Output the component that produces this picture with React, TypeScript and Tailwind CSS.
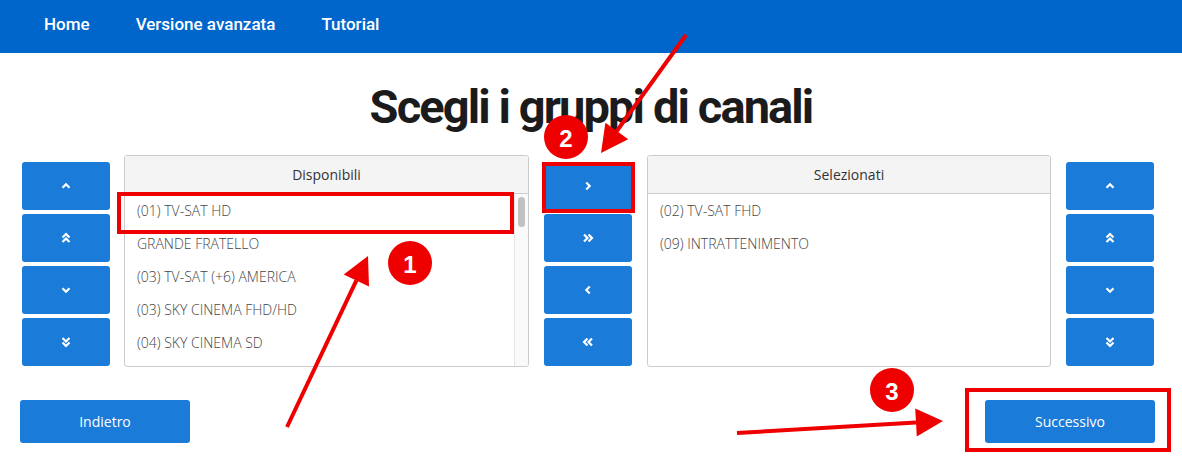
import type { ReactNode } from "react";

const available = [
  "(01) TV-SAT HD",
  "GRANDE FRATELLO",
  "(03) TV-SAT (+6) AMERICA",
  "(03) SKY CINEMA FHD/HD",
  "(04) SKY CINEMA SD",
];

const selected = ["(02) TV-SAT FHD", "(09) INTRATTENIMENTO"];

type Dir = "up" | "down" | "left" | "right";

function Chevron({ dir, double }: { dir: Dir; double?: boolean }) {
  const rot = { up: 0, right: 90, down: 180, left: 270 }[dir];
  return (
    <svg width="12" height="12" viewBox="0 0 12 12" style={{ transform: `rotate(${rot}deg)` }}>
      {double ? (
        <>
          <path d="M2.5 5.5 L6 2 L9.5 5.5" fill="none" stroke="white" strokeWidth="2.2" />
          <path d="M2.5 10 L6 6.5 L9.5 10" fill="none" stroke="white" strokeWidth="2.2" />
        </>
      ) : (
        <path d="M2.5 7.8 L6 4.3 L9.5 7.8" fill="none" stroke="white" strokeWidth="2.2" />
      )}
    </svg>
  );
}

function IconButton({ children }: { children: ReactNode }) {
  return (
    <button className="flex h-[48px] w-[88px] items-center justify-center rounded-[3px] bg-[#1a7bd8]">
      {children}
    </button>
  );
}

function ButtonColumn({ dirs }: { dirs: [Dir, boolean][] }) {
  return (
    <div className="flex w-[88px] shrink-0 flex-col gap-[4px] pt-[7px]">
      {dirs.map(([d, dbl], i) => (
        <IconButton key={i}>
          <Chevron dir={d} double={dbl} />
        </IconButton>
      ))}
    </div>
  );
}

function ListBox({
  title,
  items,
  scroll,
  width,
}: {
  title: string;
  items: string[];
  scroll?: boolean;
  width: string;
}) {
  return (
    <div className={`flex h-[212px] shrink-0 flex-col overflow-hidden rounded-[3px] border border-[#cccccc] ${width}`}>
      <div className="flex h-[38px] shrink-0 items-center justify-center border-b border-[#cccccc] bg-[#f4f4f4] text-[14px] text-[#333]">
        {title}
      </div>
      <div className="flex min-h-0 flex-1">
        <div className="flex-1 overflow-hidden">
          {items.map((it) => (
            <div key={it} className="flex h-[33px] items-center px-[12px] text-[14px] font-light text-[#444]">
              {it}
            </div>
          ))}
        </div>
        {scroll && (
          <div className="w-[14px] shrink-0 border-l border-[#e6e6e6] bg-[#fafafa] pt-[3px]">
            <div className="mx-auto h-[30px] w-[7px] rounded-full bg-[#c1c1c1]" />
          </div>
        )}
      </div>
    </div>
  );
}

function Annotations() {
  const red = "#ee0000";
  const circle = (cx: number, cy: number, n: string) => (
    <g>
      <circle cx={cx} cy={cy} r="22" fill={red} />
      <text
        x={cx}
        y={cy + 1}
        fill="white"
        fontSize="24"
        fontWeight="bold"
        fontFamily="'Liberation Sans', Arial, sans-serif"
        textAnchor="middle"
        dominantBaseline="central"
      >
        {n}
      </text>
    </g>
  );
  return (
    <svg className="pointer-events-none absolute left-0 top-0" width="1182" height="476">
      <rect x="119" y="194" width="393" height="38" fill="none" stroke={red} strokeWidth="4" />
      <rect x="544" y="164" width="89" height="47" fill="none" stroke={red} strokeWidth="4" />
      <rect x="967" y="390" width="202" height="60" fill="none" stroke={red} strokeWidth="4" />

      <line x1="287" y1="427" x2="356.4" y2="280.4" stroke={red} strokeWidth="4" />
      <polygon points="368,256 343.7,274.4 369,286.4" fill={red} />

      <line x1="686" y1="35" x2="616.8" y2="131" stroke={red} strokeWidth="4" />
      <polygon points="601,153 628.2,139.2 605.4,122.8" fill={red} />

      <line x1="737" y1="433" x2="916" y2="422.6" stroke={red} strokeWidth="4" />
      <polygon points="943,421 916.8,436.6 915.2,408.6" fill={red} />

      {circle(410, 263, "1")}
      {circle(566, 137, "2")}
      {circle(892, 390, "3")}
    </svg>
  );
}

export default function App() {
  return (
    <div className="relative h-[476px] w-full overflow-hidden bg-white font-['Open_Sans',sans-serif]">
      <nav className="flex h-[53px] items-center gap-[46px] bg-[#0066cc] pb-[4px] pl-[44px] font-['Roboto',sans-serif] text-[17px] font-medium text-white">
        <span>Home</span>
        <span>Versione avanzata</span>
        <span>Tutorial</span>
      </nav>

      <div className="flex h-[102px] items-center justify-center pt-[6px]">
        <h1 className="font-['Roboto',sans-serif] text-[47px] font-bold tracking-[-1.9px] text-[#1b1b1b]">
          Scegli i gruppi di canali
        </h1>
      </div>

      <div className="flex h-[212px] pl-[22px]">
        <ButtonColumn dirs={[["up", false], ["up", true], ["down", false], ["down", true]]} />
        <div className="w-[14px]" />
        <ListBox title="Disponibili" items={available} scroll width="w-[405px]" />
        <div className="w-[15px]" />
        <ButtonColumn dirs={[["right", false], ["right", true], ["left", false], ["left", true]]} />
        <div className="w-[15px]" />
        <ListBox title="Selezionati" items={selected} width="w-[404px]" />
        <div className="w-[15px]" />
        <ButtonColumn dirs={[["up", false], ["up", true], ["down", false], ["down", true]]} />
      </div>

      <div className="mt-[33px] flex justify-between pl-[20px] pr-[27px]">
        <button className="h-[43px] w-[170px] rounded-[3px] bg-[#1a7bd8] text-[14px] text-white">Indietro</button>
        <button className="h-[43px] w-[170px] rounded-[3px] bg-[#1a7bd8] text-[14px] text-white">Successivo</button>
      </div>

      <Annotations />
    </div>
  );
}
